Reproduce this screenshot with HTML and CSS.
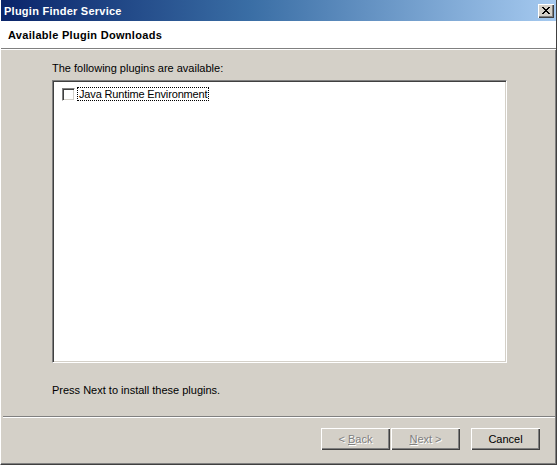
FILE: index.html
```html
<!DOCTYPE html>
<html>
<head>
<meta charset="utf-8">
<title>Plugin Finder Service</title>
<link rel="stylesheet" href="styles.css">
</head>
<body>
<div class="window">
  <div class="titlebar">
    <span class="title">Plugin Finder Service</span>
    <button class="close" type="button" aria-label="Close">
      <svg width="8" height="7" viewBox="0 0 8 7"><path d="M0 0h2v1h-2zM6 0h2v1h-2zM1 1h2v1h-2zM5 1h2v1h-2zM2 2h4v1h-4zM3 3h2v1h-2zM2 4h4v1h-4zM1 5h2v1h-2zM5 5h2v1h-2zM0 6h2v1h-2zM6 6h2v1h-2z" fill="#000"/></svg>
    </button>
  </div>
  <div class="header">Available Plugin Downloads</div>
  <div class="content">
    <div class="label">The following plugins are available:</div>
    <div class="listbox">
      <div class="item">
        <span class="checkbox"></span>
        <span class="item-label">Java Runtime Environment</span>
      </div>
    </div>
    <div class="label note">Press Next to install these plugins.</div>
  </div>
  <div class="footer">
    <div class="buttons">
      <button class="btn disabled" type="button">&lt; <u>B</u>ack</button>
      <button class="btn disabled" type="button"><u>N</u>ext &gt;</button>
      <button class="btn cancel" type="button">Cancel</button>
    </div>
  </div>
</div>
</body>
</html>
```
FILE: styles.css
```css
* { box-sizing: border-box; }
html, body { margin: 0; padding: 0; background: #d4d0c8; }
body {
  font-family: "Liberation Sans", Arial, sans-serif;
  font-size: 11px;
  color: #000;
}
.window {
  width: 557px;
  height: 465px;
  display: flex;
  flex-direction: column;
  background: #d4d0c8;
  border-left: 1px solid #ffffff;
  border-right: 1px solid #404040;
  border-bottom: 1px solid #404040;
  box-shadow: inset -1px -1px 0 #808080;
}
.titlebar {
  height: 21px;
  flex: none;
  display: flex;
  align-items: center;
  justify-content: space-between;
  padding: 0 2px 0 3px;
  background: linear-gradient(to right, #0a246a 0%, #3a6ea5 45%, #a6caf0 100%);
}
.title {
  color: #fff;
  font-weight: bold;
  font-size: 11px;
  letter-spacing: 0.25px;
}
.close {
  width: 16px;
  height: 14px;
  padding: 0;
  margin: 0;
  display: flex;
  align-items: center;
  justify-content: center;
  background: #d4d0c8;
  border: none;
  box-shadow: inset 1px 1px 0 #ffffff, inset -1px -1px 0 #404040, inset -2px -2px 0 #808080;
}
.header {
  height: 28px;
  flex: none;
  background: #fff;
  font-weight: bold;
  letter-spacing: 0.3px;
  padding: 8px 0 0 7px;
  border-bottom: 1px solid #808080;
  box-shadow: 0 1px 0 #ffffff;
}
.content {
  flex: 1;
  display: flex;
  flex-direction: column;
  padding: 13px 51px 0 49px;
  border-bottom: 1px solid #808080;
  margin: 0 1px 0 2px;
  box-shadow: 0 1px 0 #ffffff;
}
.label {
  line-height: 13px;
  height: 13px;
}
.listbox {
  margin-top: 5px;
  height: 283px;
  width: 455px;
  background: #fff;
  border-top: 1px solid #808080;
  border-left: 1px solid #808080;
  border-right: 1px solid #ffffff;
  border-bottom: 1px solid #ffffff;
  box-shadow: inset 1px 1px 0 #404040, inset -1px -1px 0 #d4d0c8;
  padding: 6px 0 0 9px;
}
.item {
  display: flex;
  align-items: center;
  gap: 2px;
}
.checkbox {
  width: 13px;
  height: 13px;
  flex: none;
  background: #fff;
  border-top: 1px solid #808080;
  border-left: 1px solid #808080;
  border-right: 1px solid #ffffff;
  border-bottom: 1px solid #ffffff;
  box-shadow: inset 1px 1px 0 #404040, inset -1px -1px 0 #d4d0c8;
}
.item-label {
  border: 1px dotted #000;
  padding: 0 1px;
  line-height: 12px;
  letter-spacing: -0.15px;
}
.note {
  margin-top: 21px;
}
.footer {
  flex: none;
  height: 47px;
  padding: 11px 16px 0 0;
}
.buttons {
  display: flex;
  justify-content: flex-end;
}
.btn {
  width: 69px;
  height: 22px;
  padding: 0;
  margin: 0;
  font-family: "Liberation Sans", Arial, sans-serif;
  font-size: 11px;
  color: #000;
  background: #d4d0c8;
  border: none;
  box-shadow: inset 1px 1px 0 #ffffff, inset -1px -1px 0 #404040, inset -2px -2px 0 #808080;
}
.btn + .btn { margin-left: 1px; }
.btn.cancel { margin-left: 11px; }
.btn.disabled {
  color: #808080;
  text-shadow: 1px 1px 0 #ffffff;
}
```
